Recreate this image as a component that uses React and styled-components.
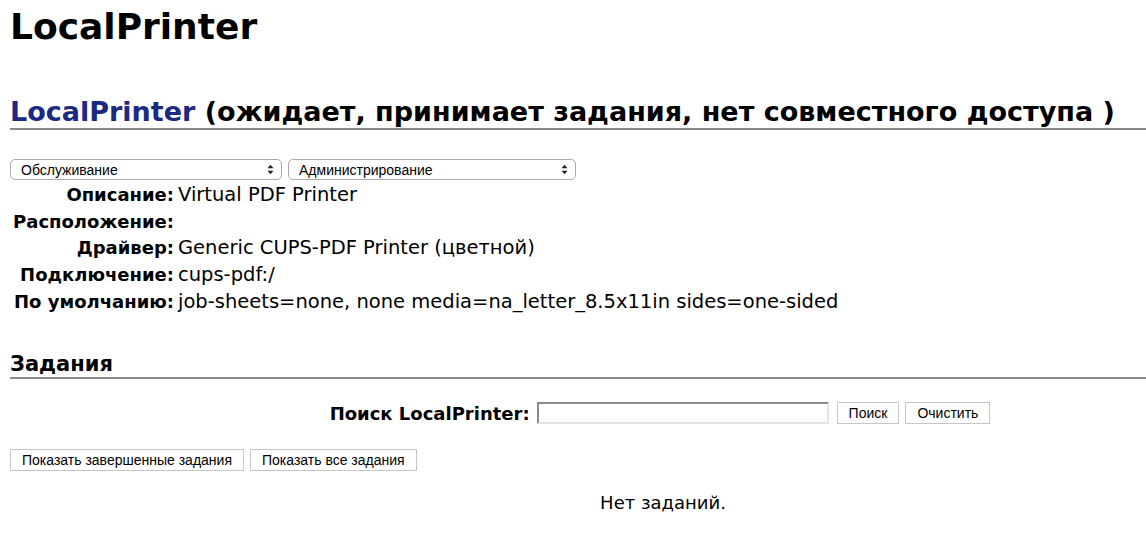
import React from "react";
import styled, { createGlobalStyle } from "styled-components";

const GlobalStyle = createGlobalStyle`
    html, body {
        margin: 0;
        padding: 0;
        overflow: hidden;
        background: #fff;
    }
    body {
        font-family: "DejaVu Sans", "Liberation Sans", sans-serif;
        color: #000;
    }
`;

const printer = {
    name: "LocalPrinter",
    state: "(ожидает, принимает задания, нет совместного доступа )",
    details: [
        ["Описание:", "Virtual PDF Printer"],
        ["Расположение:", ""],
        ["Драйвер:", "Generic CUPS-PDF Printer (цветной)"],
        ["Подключение:", "cups-pdf:/"],
        ["По умолчанию:", "job-sheets=none, none media=na_letter_8.5x11in sides=one-sided"],
    ],
};

const SelectArrows = () => (
    <svg width="7" height="11" viewBox="0 0 7 11">
        <path d="M0.5 4.2 L3.5 0.8 L6.5 4.2 Z" fill="#222" />
        <path d="M0.5 6.8 L3.5 10.2 L6.5 6.8 Z" fill="#222" />
    </svg>
);

const Dropdown = ({ label, width }) => (
    <SelectBox width={width}>
        <select defaultValue={label}>
            <option>{label}</option>
        </select>
        <Arrows>
            <SelectArrows />
        </Arrows>
    </SelectBox>
);

const App = () => {
    return (
        <>
            <GlobalStyle />
            <Page>
                <Title>{printer.name}</Title>
                <PrinterHeader>
                    <PrinterLink href="#">{printer.name}</PrinterLink> {printer.state}
                </PrinterHeader>

                <Toolbar>
                    <Dropdown label="Обслуживание" width={272} />
                    <Dropdown label="Администрирование" width={288} />
                </Toolbar>

                <InfoTable>
                    {printer.details.map(([label, value]) => (
                        <React.Fragment key={label}>
                            <Label>{label}</Label>
                            <Value>{value}</Value>
                        </React.Fragment>
                    ))}
                </InfoTable>

                <SectionHeader>Задания</SectionHeader>

                <SearchForm onSubmit={(e) => e.preventDefault()}>
                    <SearchLabel>Поиск LocalPrinter:</SearchLabel>
                    <SearchInput type="search" />
                    <Button type="submit">Поиск</Button>
                    <Button>Очистить</Button>
                </SearchForm>

                <ButtonRow>
                    <Button>Показать завершенные задания</Button>
                    <Button>Показать все задания</Button>
                </ButtonRow>

                <Empty>Нет заданий.</Empty>
            </Page>
        </>
    );
};

export default App;

const Page = styled.div`
    width: 1306px;
    padding: 0 0 0 10px;
`;

const Title = styled.h1`
    margin: 0;
    padding-top: 5px;
    font-size: 36px;
    line-height: 44px;
    font-weight: 700;
`;

const PrinterHeader = styled.h2`
    margin: 47px 0 0;
    font-size: 27px;
    line-height: 32px;
    font-weight: 700;
    white-space: nowrap;
    border-bottom: 2px solid #8a8a8a;
`;

const PrinterLink = styled.a`
    color: #1b2a80;
    text-decoration: none;
`;

const Toolbar = styled.div`
    display: flex;
    gap: 6px;
    margin-top: 29px;
`;

const SelectBox = styled.div`
    position: relative;
    width: ${(props) => props.width}px;
    height: 21px;
    select {
        appearance: none;
        width: 100%;
        height: 100%;
        margin: 0;
        padding: 0 0 0 10px;
        border: 1px solid #a9a9a9;
        border-radius: 5px;
        background: #fff;
        font-family: "Liberation Sans", Arial, sans-serif;
        font-size: 14px;
        color: #000;
    }
`;

const Arrows = styled.span`
    position: absolute;
    right: 8px;
    top: 5px;
    display: flex;
    pointer-events: none;
`;

const InfoTable = styled.div`
    display: grid;
    grid-template-columns: 164px auto;
    grid-auto-rows: 26.75px;
    column-gap: 4px;
    align-items: center;
    margin-top: 1px;
    font-size: 18px;
`;

const Label = styled.div`
    font-weight: 700;
    text-align: right;
    white-space: nowrap;
`;

const Value = styled.div`
    font-size: 19.5px;
    white-space: nowrap;
`;

const SectionHeader = styled.h2`
    margin: 36px 0 0;
    font-size: 21px;
    line-height: 26px;
    font-weight: 700;
    border-bottom: 2px solid #8a8a8a;
`;

const SearchForm = styled.form`
    display: flex;
    justify-content: center;
    align-items: center;
    margin-top: 23px;
    height: 23px;
`;

const SearchLabel = styled.span`
    font-size: 18px;
    font-weight: 700;
    margin-right: 7px;
`;

const SearchInput = styled.input`
    box-sizing: border-box;
    width: 292px;
    height: 22px;
    margin: 0 8px 0 0;
    padding: 0 4px;
    border-style: solid;
    border-width: 2px;
    border-color: #8a8a8a #e4e4e4 #e4e4e4 #8a8a8a;
    background: #fff;
    font-size: 14px;
`;

const Button = styled.button.attrs((props) => ({
    type: props.type || "button",
}))`
    box-sizing: border-box;
    height: 22px;
    margin: 0 6px 0 0;
    padding: 0 11px;
    border: 1px solid #c6c6c6;
    border-radius: 0;
    background: #fff;
    font-family: "Liberation Sans", Arial, sans-serif;
    font-size: 14px;
    color: #000;
    cursor: pointer;
`;

const ButtonRow = styled.div`
    display: flex;
    margin-top: 24px;
`;

const Empty = styled.p`
    margin: 20px 0 0;
    font-size: 18px;
    line-height: 24px;
    text-align: center;
`;
